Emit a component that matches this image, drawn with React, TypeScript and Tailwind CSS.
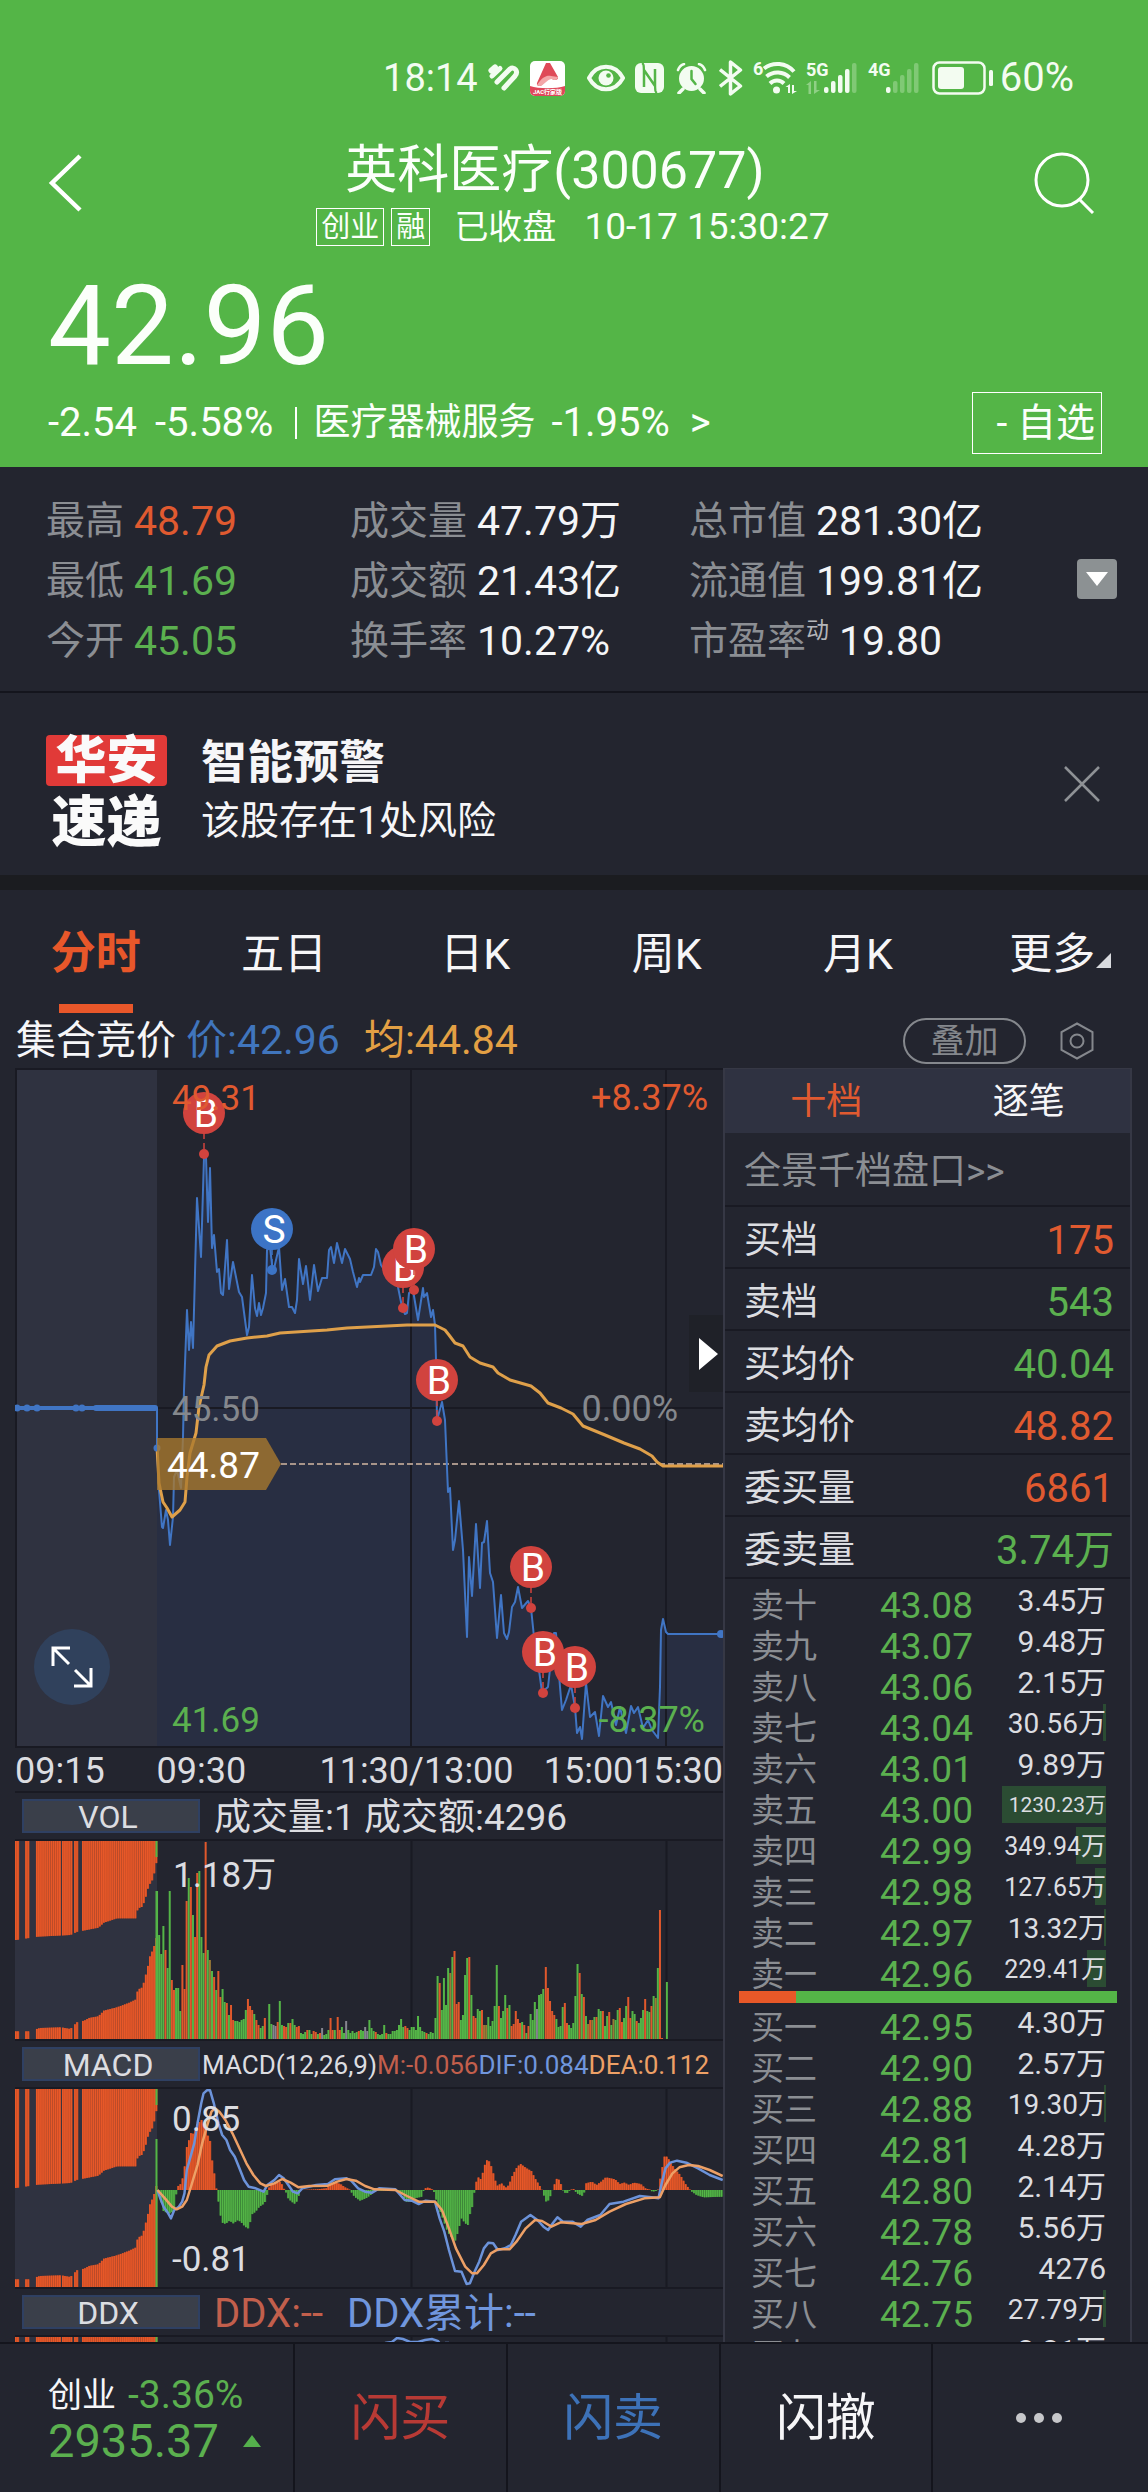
import React from "react";

type Point = [number, number];

const UP = "#e05a30";
const DOWN = "#5bb04f";
const toPoints = (points: Point[]) => points.map((p) => p.join(",")).join(" ");

/* ---------- Status bar ---------- */

function SignalBars({ label, lit, arrows }: { label: string; lit: number; arrows?: boolean }) {
  return (
    <svg className="overflow-visible" width="52" height="36" viewBox="0 0 52 36" aria-hidden="true">
      <text x="0" y="16" fontSize="18" fontWeight="700" fontFamily="Roboto, sans-serif" fill="#f3fcf1">
        {label}
      </text>
      {arrows && (
        <g fill="#8fd085">
          <path d="M5 21v13H2.500V25H0z" />
          <path d="M8 34V21h2.500v9H14z" />
        </g>
      )}
      {[0, 1, 2, 3, 4].map((i) => (
        <rect
          key={i}
          x={18 + i * 7}
          y={i === 0 ? 27 : 27 - i * 6}
          width="4.500"
          height={i === 0 ? 6 : 6 + i * 6}
          rx="2"
          fill={i < lit ? "#f3fcf1" : "#80c975"}
        />
      ))}
    </svg>
  );
}

function StatusBar() {
  return (
    <div className="flex h-[156px] items-center justify-end pr-[74px] text-[#f3fcf1]">
      <span className="mr-2.5 text-[38px] leading-10">18:14</span>
      <svg className="mr-2.5" width="32" height="28" viewBox="0 0 32 28" fill="none" stroke="#f3fcf1" strokeWidth="5" strokeLinecap="round" aria-hidden="true">
        <path d="M3.500 6.500 7 3.500" strokeWidth="6" />
        <path d="M4 12 12 4.500" />
        <path d="M9 18 22 5c4-3 9 2 5 7L16 24" />
        <path d="M13 21 21 12" stroke="#54b547" strokeWidth="2" />
      </svg>
      <svg className="mr-[22px]" width="35" height="35" viewBox="0 0 35 35" aria-hidden="true">
        <rect width="35" height="35" rx="5" fill="#fff" />
        <path d="M0 25c9 3 26 3 35 0v5a5 5 0 0 1-5 5H5a5 5 0 0 1-5-5z" fill="#e0475a" />
        <path d="M16 2h4l8 14c1 3-4 4-6 2l-3-3-7 9c-2 2-6 1-5-2z" fill="#df4a58" />
        <path d="M7 24c5-8 10-10 14-9l7 1c0 3-4 4-6 2-5 0-9 8-13 7z" fill="#f3a6a8" />
        <text x="17.500" y="33" fontSize="6" fontWeight="700" textAnchor="middle" fill="#fff">JAC行家版</text>
      </svg>
      <svg className="mr-2.5" width="38" height="28" viewBox="0 0 38 28" fill="none" aria-hidden="true">
        <path d="M2 14C10-1 28-1 36 14 28 29 10 29 2 14z" stroke="#f3fcf1" strokeWidth="4" />
        <circle cx="19" cy="14" r="7.500" fill="#f3fcf1" />
        <circle cx="21.500" cy="11.500" r="2.300" fill="#54b547" />
      </svg>
      <svg className="mr-3" width="29" height="30" viewBox="0 0 29 30" aria-hidden="true">
        <rect width="29" height="30" rx="6" fill="#f3fcf1" />
        <path d="M9 24V7l11 16V6" fill="none" stroke="#54b547" strokeWidth="2.500" />
        <path d="M7 0c2 1 2 3 2 7M22 30c-2-1-2-3-2-7" fill="none" stroke="#54b547" strokeWidth="2" />
      </svg>
      <svg className="mr-3" width="31" height="31" viewBox="0 0 31 31" fill="none" stroke="#f3fcf1" strokeLinecap="round" aria-hidden="true">
        <circle cx="15.500" cy="15.500" r="12.500" fill="#f3fcf1" stroke="none" />
        <path d="M2 7c1-3 3-5 6-6M29 7c-1-3-3-5-6-6" strokeWidth="2.500" />
        <path d="m7 26-4 4M24 26l4 4" strokeWidth="3.500" />
        <path d="M15.500 8v8l4 5" stroke="#54b547" strokeWidth="2.500" />
      </svg>
      <svg className="mr-2.5" width="24" height="36" viewBox="0 0 24 36" fill="none" stroke="#f3fcf1" strokeWidth="3.500" strokeLinejoin="round" aria-hidden="true">
        <path d="M1 9.500 21.500 26 11.500 34V2l10 8L1 26.500" />
      </svg>
      <svg className="mr-2 overflow-visible" width="45" height="34" viewBox="0 0 45 34" fill="none" stroke="#f3fcf1" strokeWidth="4" aria-hidden="true">
        <text x="0" y="14" fontSize="18" fontWeight="700" fontFamily="Roboto, sans-serif" fill="#f3fcf1" stroke="none">6</text>
        <path d="M11 7.500c9-7 22-6 30 3M13.500 15.500c7-6 17-5 23 1M17 22.500c4-4 10-4 14 0" />
        <circle cx="23.500" cy="29" r="3.500" fill="#f3fcf1" stroke="none" />
        <g fill="#f3fcf1" stroke="none">
          <path d="M37 23v9h-2v-6h-2.500zM39 33v-9h2v6h3z" />
        </g>
      </svg>
      <span className="mr-2.5 flex"><SignalBars label="5G" lit={4} arrows /></span>
      <span className="mr-3 flex"><SignalBars label="4G" lit={1} /></span>
      <svg className="mr-1.5" width="62" height="34" viewBox="0 0 62 34" fill="none" aria-hidden="true">
        <rect x="1.500" y="1.500" width="51" height="31" rx="6" stroke="#f3fcf1" strokeWidth="2.500" />
        <rect x="6" y="6" width="26" height="22" rx="3" fill="#f3fcf1" />
        <rect x="57" y="9" width="4" height="16" rx="1.500" fill="#f3fcf1" />
      </svg>
      <span className="text-[40px] leading-10">60%</span>
    </div>
  );
}

/* ---------- Green quote header ---------- */

function QuoteHeader() {
  return (
    <header className="shrink-0 bg-[#54b547] text-[#fbfffa]">
      <StatusBar />
      <div className="-mt-3 flex items-start justify-between px-12">
        <button aria-label="返回" className="mt-2 flex h-[62px] w-16 items-center">
          <svg width="34" height="60" viewBox="0 0 34 60" fill="none" stroke="#fff" strokeWidth="4.500" aria-hidden="true">
            <path d="M32 3 4 30 32 57" />
          </svg>
        </button>
        <div className="flex flex-col items-center">
          <h1 className="pr-9 text-[52px] leading-[54px]">英科医疗(300677)</h1>
          <div className="mt-2.5 flex items-center text-[37px] leading-[38px]">
            <span className="mr-[7px] border border-white px-1 text-[29px] leading-9">创业</span>
            <span className="mr-6 border border-white px-1 text-[29px] leading-9">融</span>
            <span className="mr-7 text-[34px]">已收盘</span>
            <span>10-17 15:30:27</span>
          </div>
        </div>
        <button aria-label="搜索" className="mt-2 flex h-[62px] w-[66px] items-center">
          <svg width="62" height="62" viewBox="0 0 62 62" fill="none" stroke="#fff" strokeWidth="3" aria-hidden="true">
            <circle cx="28" cy="28" r="26" />
            <path d="m45 47 14 14" />
          </svg>
        </button>
      </div>
      <p className="mt-6 pl-12 text-[112px] leading-[112px]">42.96</p>
      <div className="flex h-[85px] items-center pr-[46px] pb-1 pl-12 text-[40px] leading-[44px]">
        <span className="mr-[18px]">-2.54</span>
        <span className="mr-[22px]">-5.58%</span>
        <span className="mr-4 h-8 w-0.5 bg-white" />
        <a href="#sector" className="flex items-center">
          <span className="mr-4 text-[37px]">医疗器械服务</span>
          <span className="mr-5">-1.95%</span>
          <span>&gt;</span>
        </a>
        <button className="ml-auto h-[62px] border border-white pr-1.5 pl-6 text-[39px] leading-[58px]">- 自选</button>
      </div>
    </header>
  );
}

/* ---------- Key statistics ---------- */

function Stat({ label, sup, value, tone }: { label: string; sup?: string; value: string; tone?: string }) {
  return (
    <div className="flex h-[60px] items-center whitespace-nowrap leading-[60px]">
      <dt className="mr-2.5 text-[39px] text-[#8b8e93]">
        {label}
        {sup && <sup className="relative -top-4 align-baseline text-[23px] text-[#b4b6ba]">{sup}</sup>}
      </dt>
      <dd className={`text-[41px] ${tone ?? "text-[#f4f5f7]"}`}>{value}</dd>
    </div>
  );
}

function Stats() {
  return (
    <section className="flex h-[226px] shrink-0 items-center border-b-2 border-[#14151d] pr-[31px] pl-[46px]">
      <dl className="w-[304px] pt-1">
        <Stat label="最高" value="48.79" tone="text-[#e05a30]" />
        <Stat label="最低" value="41.69" tone="text-[#5bb04f]" />
        <Stat label="今开" value="45.05" tone="text-[#5bb04f]" />
      </dl>
      <dl className="w-[339px] pt-1">
        <Stat label="成交量" value="47.79万" />
        <Stat label="成交额" value="21.43亿" />
        <Stat label="换手率" value="10.27%" />
      </dl>
      <dl className="flex-1 pt-1">
        <Stat label="总市值" value="281.30亿" />
        <Stat label="流通值" value="199.81亿" />
        <Stat label="市盈率" sup="动" value="19.80" />
      </dl>
      <button aria-label="展开" className="flex size-10 items-center justify-center rounded-sm bg-[#8c9193]">
        <svg width="22" height="14" viewBox="0 0 22 14" aria-hidden="true">
          <path d="M0 0h22L11 14z" fill="#fff" />
        </svg>
      </button>
    </section>
  );
}

/* ---------- Risk alert ---------- */

function Alert() {
  return (
    <section className="flex h-[197px] shrink-0 items-center border-b-[15px] border-[#1b1c20] pr-12 pl-[46px]">
      <div className="mr-[34px] flex flex-col items-center gap-2.5 pt-3.5 font-black text-[#fafafa]">
        <span className="w-[121px] rounded bg-[#e13a38] text-center text-[51px] leading-[51px]">华安</span>
        <span className="text-[55px] leading-[52px]">速递</span>
      </div>
      <div className="flex-1 pt-3.5 text-[#f6f6f8]">
        <h2 className="text-[46px] leading-[60px] font-bold">智能预警</h2>
        <p className="text-[39px] leading-[58px]">该股存在1处风险</p>
      </div>
      <button aria-label="关闭">
        <svg width="36" height="36" viewBox="0 0 36 36" stroke="#8e9195" strokeWidth="2.500" aria-hidden="true">
          <path d="m1 1 34 34M35 1 1 35" />
        </svg>
      </button>
    </section>
  );
}

/* ---------- Period tabs ---------- */

function PeriodTabs() {
  return (
    <nav className="grid h-[123px] shrink-0 grid-cols-6 text-[43px] leading-[60px] text-[#f6f6f8]" role="tablist">
      <button role="tab" aria-selected="true" className="flex flex-col items-center pt-[34px] text-[45px] font-bold text-[#e8572a]">
        分时
        <span className="mt-5 h-[9px] w-[74px] shrink-0 bg-[#e8572a]" />
      </button>
      {["五日", "日K", "周K", "月K"].map((name) => (
        <button key={name} role="tab" aria-selected="false" className="flex justify-center pt-[34px] pr-1.5">
          {name}
        </button>
      ))}
      <button role="tab" aria-selected="false" className="flex justify-center pt-[34px] pl-4">
        更多
        <svg className="mt-7" width="16" height="16" viewBox="0 0 16 16" aria-hidden="true">
          <path d="M16 1v15H1z" fill="#d8dade" />
        </svg>
      </button>
    </nav>
  );
}

function ChartInfo() {
  return (
    <div className="flex h-[55px] shrink-0 items-center pr-[54px] pl-4 text-[41px] leading-[57px]">
      <span className="mr-2.5 text-[40px] text-[#f6f6f8]">集合竞价</span>
      <span className="mr-6 text-[#4075bd]">价:42.96</span>
      <span className="text-[#e3a044]">均:44.84</span>
      <button className="ml-auto h-[46px] w-[123px] rounded-full border-2 border-[#85888d] text-center text-[34px] leading-[42px] text-[#85888d]">
        叠加
      </button>
      <button aria-label="设置" className="ml-[34px]">
        <svg width="34" height="38" viewBox="0 0 34 38" fill="none" stroke="#85888d" strokeWidth="2" aria-hidden="true">
          <path d="m17 1.500 15.500 8.500v18L17 36.500 1.500 28V10z" />
          <circle cx="17" cy="19" r="6.500" />
        </svg>
      </button>
    </div>
  );
}

/* ---------- Price chart ---------- */

const PRICE: Point[] = [
  [157, 1408], [157, 1447], [159, 1490], [162, 1527], [163, 1528], [166, 1510], [168, 1520], [170, 1545], [173, 1517],
  [174, 1477], [177, 1470], [181, 1488], [183, 1437], [184, 1390], [187, 1310], [189, 1350], [191, 1322], [193, 1348],
  [197, 1198], [201, 1257], [204, 1157], [206, 1157], [208, 1222], [210, 1168], [212, 1248], [214, 1235], [217, 1272],
  [219, 1269], [221, 1293], [223, 1295], [227, 1240], [229, 1289], [233, 1262], [239, 1292], [242, 1297], [247, 1335],
  [249, 1327], [252, 1275], [255, 1308], [257, 1316], [259, 1303], [261, 1315], [263, 1308], [266, 1293], [267, 1250],
  [270, 1247], [273, 1273], [279, 1247], [282, 1290], [285, 1279], [289, 1307], [292, 1307], [295, 1313], [297, 1300],
  [299, 1259], [303, 1284], [306, 1266], [310, 1300], [314, 1265], [318, 1291], [322, 1278], [327, 1278], [329, 1250],
  [331, 1247], [334, 1263], [337, 1243], [342, 1263], [345, 1249], [350, 1259], [353, 1272], [357, 1287], [359, 1278],
  [360, 1282], [363, 1275], [371, 1275], [374, 1267], [376, 1249], [378, 1252], [381, 1265], [383, 1268], [398, 1287],
  [402, 1307], [405, 1314], [407, 1313], [409, 1293], [413, 1290], [418, 1320], [423, 1288], [424, 1297], [427, 1293],
  [431, 1317], [433, 1310], [435, 1325], [436, 1360], [437, 1420], [442, 1402], [445, 1420], [448, 1492], [450, 1488],
  [453, 1550], [455, 1540], [459, 1501], [463, 1550], [467, 1637], [469, 1557], [472, 1596], [476, 1524], [480, 1588],
  [482, 1543], [484, 1542], [487, 1521], [490, 1573], [493, 1582], [497, 1638], [501, 1595], [504, 1633], [507, 1639],
  [509, 1632], [512, 1607], [515, 1602], [518, 1587], [522, 1608], [528, 1601], [531, 1608], [534, 1637], [539, 1670],
  [542, 1692], [548, 1687], [554, 1633], [556, 1633], [560, 1687], [562, 1710], [566, 1700], [571, 1685], [575, 1707],
  [577, 1733], [580, 1727], [582, 1739], [586, 1683], [590, 1717], [595, 1712], [599, 1736], [603, 1696], [608, 1707],
  [611, 1702], [616, 1725], [620, 1707], [626, 1733], [631, 1706], [634, 1713], [638, 1707], [643, 1728], [648, 1720],
  [652, 1730], [658, 1738], [660, 1687], [661, 1630], [663, 1619], [666, 1632], [668, 1634], [723, 1634],
];

const AVERAGE: Point[] = [
  [157, 1447], [159, 1483], [163, 1502], [167, 1508], [172, 1517], [180, 1510], [185, 1502], [187, 1477], [190, 1453],
  [196, 1433], [199, 1407], [204, 1385], [206, 1367], [209, 1355], [217, 1346], [230, 1341], [247, 1338], [267, 1336],
  [280, 1333], [327, 1330], [347, 1328], [407, 1325], [435, 1325], [445, 1330], [449, 1335], [455, 1343], [463, 1346],
  [470, 1357], [480, 1363], [493, 1367], [498, 1373], [510, 1380], [531, 1386], [540, 1393], [548, 1403], [561, 1408],
  [573, 1414], [583, 1426], [605, 1435], [624, 1443], [640, 1449], [652, 1456], [657, 1462], [663, 1466], [723, 1466],
];

const TRADES: { side: "B" | "S"; x: number; y: number }[] = [
  { side: "B", x: 204, y: 1113 },
  { side: "S", x: 272, y: 1229 },
  { side: "B", x: 403, y: 1267 },
  { side: "B", x: 414, y: 1249 },
  { side: "B", x: 437, y: 1380 },
  { side: "B", x: 531, y: 1567 },
  { side: "B", x: 543, y: 1652 },
  { side: "B", x: 575, y: 1667 },
];

function PriceChart() {
  return (
    <div className="relative">
      <svg className="block w-full" viewBox="15 1068 708 680" fontSize="35" fontFamily="Roboto, sans-serif" role="img" aria-label="分时走势">
        <rect x="15" y="1068" width="142" height="680" fill="#2f3240" />
        <polygon points={`157,1748 ${toPoints(PRICE)} 723,1748`} fill="#282e42" />
        <g stroke="#191a23" strokeWidth="2">
          <path d="M15 1069H723M157 1408H723M411 1068V1748M666 1068V1748M15 1747H723M16 1068V1748" fill="none" />
        </g>
        <path d="M281 1464H723" stroke="#a8958a" strokeWidth="2" strokeDasharray="6 3" />
        <path d="M15 1408H157" stroke="#4075c4" strokeWidth="4" />
        {[17, 27, 37, 76, 82].map((x) => (
          <circle key={x} cx={x} cy="1408" r="3.500" fill="#4075c4" />
        ))}
        <path d="M96 1408H155" stroke="#4075c4" strokeWidth="6" strokeLinecap="round" />
        <polyline points={toPoints(PRICE)} fill="none" stroke="#4075c4" strokeWidth="2" strokeLinejoin="round" />
        <polyline points={toPoints(AVERAGE)} fill="none" stroke="#dfa04a" strokeWidth="3" strokeLinejoin="round" />
        <circle cx="157" cy="1448" r="3.500" fill="#4075c4" />
        <circle cx="721" cy="1634" r="4" fill="#4075c4" />
        {TRADES.map(({ side, x, y }) => {
          const color = side === "B" ? "#d1433e" : "#3c74c6";
          return (
            <g key={x}>
              <path d={`M${x} ${y + 20}v20`} stroke={color} strokeWidth="1.500" strokeDasharray="6 4" />
              <circle cx={x} cy={y + 41} r="5" fill={color} />
              <circle cx={x} cy={y} r="21" fill={color} />
              <text x={x + 2} y={y + 14} fontSize="39" textAnchor="middle" fill="#fff">{side}</text>
            </g>
          );
        })}
        <path d="M157 1438H266L281 1464 266 1490H157z" fill="#ab7a2e" fillOpacity="0.780" />
        <text x="167" y="1478" fontSize="37" fill="#fff">44.87</text>
        <text x="172" y="1110" fill={UP}>49.31</text>
        <text x="708" y="1110" fontSize="36" textAnchor="end" fill={UP}>+8.37%</text>
        <text x="172" y="1421" fill="#85888d">45.50</text>
        <text x="678" y="1421" fontSize="36" textAnchor="end" fill="#85888d">0.00%</text>
        <text x="172" y="1732" fill={DOWN}>41.69</text>
        <text x="705" y="1732" fontSize="36" textAnchor="end" fill={DOWN}>-8.37%</text>
      </svg>
      <button aria-label="全屏" className="absolute bottom-[43px] left-[19px] flex size-[76px] items-center justify-center rounded-full bg-[#30415c]">
        <svg width="42" height="42" viewBox="0 0 42 42" fill="none" stroke="#fff" strokeWidth="3" aria-hidden="true">
          <path d="M2 20V2h17M2 2l16 16M40 22v18H23M40 40 24 24" />
        </svg>
      </button>
      <button aria-label="收起盘口" className="absolute top-[247px] right-0 flex h-[77px] w-[34px] items-center justify-center bg-[#1f2128] pl-1">
        <svg width="19" height="32" viewBox="0 0 19 32" aria-hidden="true">
          <path d="M0 0v32l19-16z" fill="#fff" />
        </svg>
      </button>
    </div>
  );
}

/* ---------- Indicator charts ---------- */

const unit = (x: number) => (x - 33) * 0.4656;

function heightAt(points: Point[], x: number) {
  for (let i = 1; i < points.length; i++) {
    const [x0, y0] = points[i - 1];
    const [x1, y1] = points[i];
    if (x <= x1) return y0 + ((y1 - y0) * (x - x0)) / (x1 - x0 || 1);
  }
  return points[points.length - 1][1];
}

const AUCTION_TOP: Point[] = [
  [33, 297], [80, 287], [150, 282], [165, 272], [185, 267], [210, 260], [222, 245], [250, 232], [290, 232],
  [295, 202], [305, 197], [312, 167], [318, 135], [326, 117], [331, 92], [337, 48],
];
const AUCTION_BOTTOM: Point[] = [
  [33, 23], [60, 23], [85, 33], [130, 35], [150, 30], [165, 51], [180, 55], [190, 63], [210, 68], [222, 85],
  [250, 95], [275, 108], [290, 118], [295, 148], [305, 155], [312, 193], [318, 228], [323, 261], [328, 263], [333, 303],
];
const AUCTION_SPANS: Point[] = [[33, 41], [55, 63], [78, 131], [134, 156], [160, 168], [177, 335]];

function AuctionBars() {
  const bars: React.ReactNode[] = [];
  for (const [from, to] of AUCTION_SPANS) {
    for (let x = from; x < to; x += 4.5) {
      const top = heightAt(AUCTION_TOP, x) / 3;
      const bottom = heightAt(AUCTION_BOTTOM, x) / 3;
      bars.push(
        <g key={x}>
          <rect x={unit(x)} y="0" width="2.100" height={top} fill="#c04b27" />
          <rect x={unit(x)} y="0" width="1.500" height={top} fill="#e85828" />
          <rect x={unit(x)} y={198 - bottom} width="2.100" height={bottom} fill="#c04b27" />
          <rect x={unit(x)} y={198 - bottom} width="1.500" height={bottom} fill="#e85828" />
        </g>
      );
    }
  }
  return (
    <>
      <rect width="142" height="198" fill="#2f3240" />
      {bars}
      <rect x="140.500" y="0" width="2" height="16" fill="#54b547" />
      <rect x="140.500" y="50" width="2" height="148" fill="#54b547" />
    </>
  );
}

function ChartGrid() {
  return <path d="M396.500 0V198M651.500 0V198" stroke="#191a23" strokeWidth="2" />;
}

/* Each run starts at a horizontal position; letters mark rising, falling and flat minutes. */
const VOLUME_RUNS: [number, string][] = [
  [337, "148g 104g 85g 113g 89o 71g 148g 59o 49o 51g 51g 28g 74o 50o 138o 161g 152o 124g 102o 166o 168g 102g 86g 197o 89g 79m 68g 62o 49g 68o 42o 50g 37g 36o 24g 34o 19o 18g 18g 17g 19g 20g 29g 40o 33o 29o 25g 19o 14o 11g 13g 21o"],
  [578, "35g 15g 14n 13n 17o 38g 14g 13o 12o 16g 16o 20g 14g 12o 13o 6g 5g 7g 9o 9g 5g 8o 7o 5g 6o 11n 4g 5g 9g 21o 9o 9g"],
  [725, "22o 9o 12g 6g 18n 9g 6g 8g 6g 7g 8o 9g 8g 12n 8n 19g 11g 8g 7o 5g 4g 5g 14g 6o 5g 5g 8g 8g 9g 14g 20g 12g 13o 11o 9g 12g 12g 9g 23g 12g 8g 7g 6o 5g 7g 6g"],
  [935, "21g 63g 56o 29g 61g 34g 71g 66m 82g 88o 35o 37o 19g 24g 64g 81g 82o 44g 23o 21o 30g 28g 29o 14m 14m 22g 13g 18g 33g 74g 33o 21g 28g 44g 31o 34g 13o 15o 28o 20o 16o 17g 14o 6g 13o 25g 19g 37g 30n 44g 45g 50g"],
  [1172, "72o 51o 38o 28o 24o 20g 12g 13g 32g 36o 16o 14g 11g 16g 43g 75g 66o 45g 42o 23g 15m 19o 19m 22g 22o 30g 28g 28o 13g 23g 27o 14g 20m 19g 29g 31o 17o 21g 33g 42o 21o 28g 25g 18o 16g 21g 29g 40o 28g 27g 33o 43g 41m 71g 129o 1o"],
  [1432, "57g"],
];
const BAR_COLORS: Record<string, string> = { g: "#54b547", o: "#e0582c", n: "#85858f", m: "#9a7a35" };

function VolumeChart() {
  return (
    <svg className="block w-full" viewBox="0 0 708 198" fontFamily='Roboto, "Noto Sans CJK SC", sans-serif' role="img" aria-label="成交量">
      <ChartGrid />
      <AuctionBars />
      {VOLUME_RUNS.map(([start, run]) =>
        run.split(" ").map((token, i) => {
          const height = parseInt(token, 10);
          return (
            <rect
              key={`${start}-${i}`}
              x={unit(start + i * 4.54) - 0.5}
              y={198 - height}
              width="2"
              height={height}
              fill={BAR_COLORS[token[token.length - 1]]}
            />
          );
        })
      )}
      <text x="158" y="46" fontSize="35" fill="#dcdde1">1.18万</text>
    </svg>
  );
}

const HISTOGRAM: Point[] = [
  [340, 395], [346, 430], [351, 458], [358, 455], [364, 460], [370, 455], [376, 428], [378, 390], [380, 380], [387, 372],
  [391, 355], [396, 315], [401, 248], [405, 240], [410, 215], [416, 225], [421, 195], [432, 180], [440, 200], [446, 230],
  [450, 243], [455, 308], [460, 348], [464, 390], [469, 432], [473, 470], [478, 492], [485, 490], [492, 482], [500, 490],
  [510, 480], [517, 487], [525, 500], [533, 506], [540, 463], [548, 455], [556, 440], [565, 432], [571, 420], [574, 390],
  [578, 380], [585, 370], [595, 368], [602, 365], [608, 385], [612, 392], [618, 415], [625, 425], [634, 433], [640, 410],
  [645, 390], [680, 388], [700, 385], [710, 370], [720, 368], [730, 372], [740, 382], [750, 389], [760, 410], [772, 422],
  [785, 415], [795, 405], [803, 392], [850, 392], [862, 400], [872, 425], [880, 425], [890, 415], [905, 410], [909, 390],
  [915, 382], [922, 385], [930, 390], [938, 430], [950, 475], [960, 515], [970, 535], [975, 548], [980, 528], [990, 475],
  [998, 490], [1004, 495], [1010, 450], [1015, 435], [1018, 390], [1020, 372], [1026, 352], [1032, 358], [1040, 315],
  [1046, 297], [1052, 310], [1060, 348], [1066, 378], [1076, 370], [1085, 383], [1092, 375], [1100, 345], [1110, 320],
  [1117, 312], [1130, 325], [1140, 333], [1148, 355], [1160, 382], [1163, 390], [1172, 425], [1178, 420], [1185, 392],
  [1188, 380], [1195, 355], [1202, 362], [1206, 388], [1215, 402], [1222, 392], [1230, 386], [1238, 400], [1250, 408],
  [1256, 390], [1258, 370], [1270, 365], [1280, 375], [1290, 365], [1300, 352], [1310, 355], [1320, 358], [1330, 372],
  [1340, 368], [1350, 375], [1360, 368], [1375, 372], [1385, 385], [1395, 389], [1400, 395], [1412, 392], [1415, 370],
  [1420, 335], [1425, 290], [1432, 290], [1440, 310], [1450, 330], [1460, 345], [1470, 370], [1480, 388], [1485, 395],
  [1495, 405], [1510, 412], [1553, 410],
];

const DIF: Point[] = [
  [339, 390], [345, 415], [352, 440], [362, 460], [368, 475], [375, 450], [385, 440], [392, 425], [397, 400], [402, 330],
  [412, 280], [418, 250], [425, 190], [433, 130], [438, 100], [445, 91], [452, 91], [460, 130], [470, 190], [478, 225],
  [487, 240], [495, 270], [505, 290], [515, 325], [525, 360], [535, 380], [550, 385], [567, 395], [575, 375], [590, 360],
  [600, 345], [610, 355], [620, 375], [630, 395], [640, 400], [650, 385], [680, 375], [705, 372], [720, 358], [745, 355],
  [755, 362], [770, 385], [785, 395], [800, 398], [815, 385], [850, 388], [870, 420], [885, 422], [900, 432], [915, 422],
  [935, 425], [945, 475], [955, 515], [965, 570], [978, 633], [992, 635], [1003, 672], [1010, 670], [1020, 635],
  [1030, 605], [1040, 565], [1050, 548], [1060, 550], [1070, 570], [1085, 565], [1098, 555], [1108, 525], [1120, 485],
  [1140, 465], [1155, 480], [1168, 500], [1178, 510], [1188, 490], [1198, 472], [1210, 485], [1230, 485], [1248, 500],
  [1262, 480], [1290, 465], [1310, 432], [1340, 425], [1375, 408], [1400, 412], [1415, 415], [1422, 370], [1430, 325],
  [1440, 308], [1455, 302], [1475, 308], [1500, 325], [1525, 345], [1553, 360],
];

const DEA: Point[] = [
  [339, 390], [355, 415], [370, 440], [380, 448], [392, 440], [402, 420], [412, 375], [425, 315], [435, 250], [445, 200],
  [455, 155], [462, 145], [472, 155], [485, 180], [500, 220], [515, 265], [530, 310], [545, 345], [560, 370], [572, 378],
  [590, 370], [607, 357], [625, 368], [642, 382], [665, 378], [705, 377], [725, 365], [745, 357], [765, 362], [785, 378],
  [805, 388], [850, 390], [875, 408], [900, 425], [935, 425], [950, 450], [965, 505], [980, 565], [1000, 620],
  [1015, 640], [1025, 640], [1040, 615], [1055, 580], [1070, 568], [1095, 568], [1110, 545], [1130, 505], [1150, 480],
  [1165, 483], [1185, 500], [1205, 487], [1250, 492], [1280, 480], [1310, 455], [1345, 432], [1385, 415], [1418, 412],
  [1430, 375], [1445, 340], [1460, 322], [1480, 315], [1500, 318], [1525, 330], [1553, 348],
];

const scaled = (points: Point[]) => toPoints(points.map(([x, y]): Point => [unit(x), (y - 87) / 3]));

function MacdChart() {
  const bars = Array.from({ length: 267 }, (_, i) => 341 + i * 4.54);
  return (
    <svg className="block w-full" viewBox="0 0 708 198" fontSize="35" fontFamily="Roboto, sans-serif" role="img" aria-label="MACD">
      <ChartGrid />
      <AuctionBars />
      {bars.map((x) => {
        const h = (390 - heightAt(HISTOGRAM, x)) / 3;
        return (
          <g key={x}>
            <rect x={unit(x)} y={h > 0 ? 101 - h : 101} width="2.100" height={Math.abs(h)} fill={h > 0 ? "#c04b27" : "#3d8a38"} />
            <rect x={unit(x)} y={h > 0 ? 101 - h : 101} width="1.400" height={Math.abs(h)} fill={h > 0 ? "#e85828" : "#54b547"} />
          </g>
        );
      })}
      <polyline points={scaled(DIF)} fill="none" stroke="#6c93da" strokeWidth="2.500" strokeLinejoin="round" />
      <polyline points={scaled(DEA)} fill="none" stroke="#eda066" strokeWidth="2.500" strokeLinejoin="round" />
      <text x="157" y="42" fill="#dcdde1">0.85</text>
      <text x="157" y="182" fill="#dcdde1">-0.81</text>
    </svg>
  );
}

function DdxChart() {
  return (
    <svg className="block w-full" viewBox="0 0 708 198" role="img" aria-label="DDX">
      <ChartGrid />
      <AuctionBars />
      <path d="M370 6 377 5l5-4 6 1 7 3 8 0 7-2 7-1 6 2 6 8M430 6l4 0" fill="none" stroke="#6c93da" strokeWidth="2.500" />
    </svg>
  );
}

function IndicatorBar({ name, children }: { name: string; children: React.ReactNode }) {
  return (
    <div className="flex h-[50px] items-center border-y-2 border-[#191a23] pl-[7px] whitespace-nowrap text-[#dcdde1]">
      <button className="h-[34px] w-[178px] shrink-0 border-2 border-[#2f4062] bg-[#3a3f4a] pr-1.5 text-center text-[32px] leading-8">
        {name}
      </button>
      {children}
    </div>
  );
}

function ChartColumn() {
  return (
    <div className="ml-[15px] min-w-0 flex-1">
      <PriceChart />
      <div className="flex h-[43px] text-[36px] leading-[46px] text-[#dcdde1]">
        <span className="w-1/5">09:15</span>
        <span className="w-[23%]">09:30</span>
        <span className="flex-1">11:30/13:00</span>
        <span>15:0015:30</span>
      </div>
      <IndicatorBar name="VOL">
        <span className="ml-3.5 pt-1 text-[37px] leading-[46px]">成交量:1 成交额:4296</span>
      </IndicatorBar>
      <VolumeChart />
      <IndicatorBar name="MACD">
        <span className="ml-0.5 pt-0.5 text-[26px] leading-[46px]">
          MACD(12,26,9)<span className="text-[#c25f4c]">M:-0.056</span>
          <span className="text-[#7096dd]">DIF:0.084</span>
          <span className="text-[#eda066]">DEA:0.112</span>
        </span>
      </IndicatorBar>
      <MacdChart />
      <IndicatorBar name="DDX">
        <span className="ml-3.5 pt-1 text-[40px] leading-[46px] text-[#c25f4c]">DDX:--</span>
        <span className="ml-6 pt-1 text-[40px] leading-[46px] text-[#7096dd]">DDX累计:--</span>
      </IndicatorBar>
      <DdxChart />
    </div>
  );
}

/* ---------- Order book ---------- */

const SUMMARY: [string, string, boolean][] = [
  ["买档", "175", true],
  ["卖档", "543", false],
  ["买均价", "40.04", false],
  ["卖均价", "48.82", true],
  ["委买量", "6861", true],
  ["委卖量", "3.74万", false],
];

type Order = { level: string; price: string; volume: string; bar: number };

const SELLS: Order[] = [
  { level: "卖十", price: "43.08", volume: "3.45万", bar: 0 },
  { level: "卖九", price: "43.07", volume: "9.48万", bar: 0 },
  { level: "卖八", price: "43.06", volume: "2.15万", bar: 0 },
  { level: "卖七", price: "43.04", volume: "30.56万", bar: 3 },
  { level: "卖六", price: "43.01", volume: "9.89万", bar: 0 },
  { level: "卖五", price: "43.00", volume: "1230.23万", bar: 104 },
  { level: "卖四", price: "42.99", volume: "349.94万", bar: 30 },
  { level: "卖三", price: "42.98", volume: "127.65万", bar: 11 },
  { level: "卖二", price: "42.97", volume: "13.32万", bar: 2 },
  { level: "卖一", price: "42.96", volume: "229.41万", bar: 19 },
];

const BUYS: Order[] = [
  { level: "买一", price: "42.95", volume: "4.30万", bar: 0 },
  { level: "买二", price: "42.90", volume: "2.57万", bar: 0 },
  { level: "买三", price: "42.88", volume: "19.30万", bar: 2 },
  { level: "买四", price: "42.81", volume: "4.28万", bar: 0 },
  { level: "买五", price: "42.80", volume: "2.14万", bar: 0 },
  { level: "买六", price: "42.78", volume: "5.56万", bar: 0 },
  { level: "买七", price: "42.76", volume: "4276", bar: 0 },
  { level: "买八", price: "42.75", volume: "27.79万", bar: 3 },
  { level: "买九", price: "42.74", volume: "3.31万", bar: 0 },
];

const VOLUME_SIZES: Record<number, string> = {
  4: "text-[30px]",
  5: "text-[30px]",
  6: "text-[28px]",
  7: "text-[25px]",
  8: "text-[21px]",
};

function OrderTable({ orders, label }: { orders: Order[]; label: string }) {
  return (
    <table className="w-full table-fixed border-collapse" aria-label={label}>
      <tbody>
        {orders.map(({ level, price, volume, bar }) => (
          <tr key={level} className="h-[41px]">
            <th scope="row" className="w-[138px] p-0 pt-2 pl-[26px] text-left text-[33px] leading-8 font-normal text-[#8b8e93]">
              {level}
            </th>
            <td className="p-0 pt-[9px] pl-[17px] text-[37px] leading-8 text-[#5bb04f]">{price}</td>
            <td className="w-[129px] p-0 pr-6 align-top">
              <div className="relative h-[37px] text-right leading-[39px] whitespace-nowrap text-[#dcdde1]">
                <span className="absolute inset-y-0 right-0 bg-[#2b4c33]" style={{ width: bar }} />
                <span className={`relative ${VOLUME_SIZES[volume.length > 8 ? 8 : volume.length]}`}>{volume}</span>
              </div>
            </td>
          </tr>
        ))}
      </tbody>
    </table>
  );
}

function OrderBook() {
  return (
    <aside className="mr-4 w-[409px] shrink-0 border-x-2 border-t border-[#363845]">
      <div className="grid h-16 grid-cols-2 bg-[#2f3241] text-[36px] leading-[66px]" role="tablist">
        <button role="tab" aria-selected="true" className="text-[#e05a30]">十档</button>
        <button role="tab" aria-selected="false" className="text-[#f6f6f8]">逐笔</button>
      </div>
      <a href="#depth" className="block h-[74px] border-b-2 border-[#191a23] pl-[19px] text-[37px] leading-[77px] text-[#8b8e93]">
        全景千档盘口&gt;&gt;
      </a>
      <dl className="mb-0.5 text-[#dcdde1]">
        {SUMMARY.map(([label, value, up]) => (
          <div key={label} className="flex h-[62px] justify-between border-b-2 border-[#191a23] pr-4 pl-[19px] leading-[67px]">
            <dt className="text-[37px]">{label}</dt>
            <dd className={`text-[40px] ${up ? "text-[#e05a30]" : "text-[#5bb04f]"}`}>{value}</dd>
          </div>
        ))}
      </dl>
      <OrderTable orders={SELLS} label="卖盘" />
      <div className="mr-[13px] ml-3.5 flex h-3 bg-[#54b547]">
        <span className="w-[15%] bg-[#e85828]" />
      </div>
      <OrderTable orders={BUYS} label="买盘" />
    </aside>
  );
}

/* ---------- Bottom bar ---------- */

function BottomBar() {
  return (
    <footer className="flex h-[150px] shrink-0 border-t-2 border-[#14151d] text-[50px]">
      <a href="#index" className="block w-[295px] shrink-0 border-r-2 border-[#14151d] pt-7 pl-12 text-[#5bb04f]">
        <span className="flex text-[39px] leading-[46px]">
          <span className="mr-3 text-[34px] text-[#f6f6f8]">创业</span>-3.36%
        </span>
        <span className="flex items-center text-[47px] leading-[46px]">
          2935.37
          <svg className="ml-6" width="18" height="12" viewBox="0 0 18 12" aria-hidden="true">
            <path d="M9 0 18 12H0z" fill="#54b04c" />
          </svg>
        </span>
      </a>
      <button className="flex-1 border-r-2 border-[#14151d] text-[#b83a35]">闪买</button>
      <button className="flex-1 border-r-2 border-[#14151d] text-[#3d72b8]">闪卖</button>
      <button className="flex-1 border-r-2 border-[#14151d] text-[#f6f6f8]">闪撤</button>
      <button aria-label="更多操作" className="flex flex-1 items-center justify-center gap-2 pr-1">
        <span className="size-2.5 rounded-full bg-[#c6c7ca]" />
        <span className="size-2.5 rounded-full bg-[#c6c7ca]" />
        <span className="size-2.5 rounded-full bg-[#c6c7ca]" />
      </button>
    </footer>
  );
}

export default function App() {
  return (
    <div className="flex h-screen flex-col overflow-hidden bg-[#23252f] font-[Roboto,'Noto_Sans_CJK_SC',sans-serif]">
      <QuoteHeader />
      <Stats />
      <Alert />
      <PeriodTabs />
      <ChartInfo />
      <main className="flex min-h-0 flex-1 overflow-hidden">
        <ChartColumn />
        <OrderBook />
      </main>
      <BottomBar />
    </div>
  );
}
